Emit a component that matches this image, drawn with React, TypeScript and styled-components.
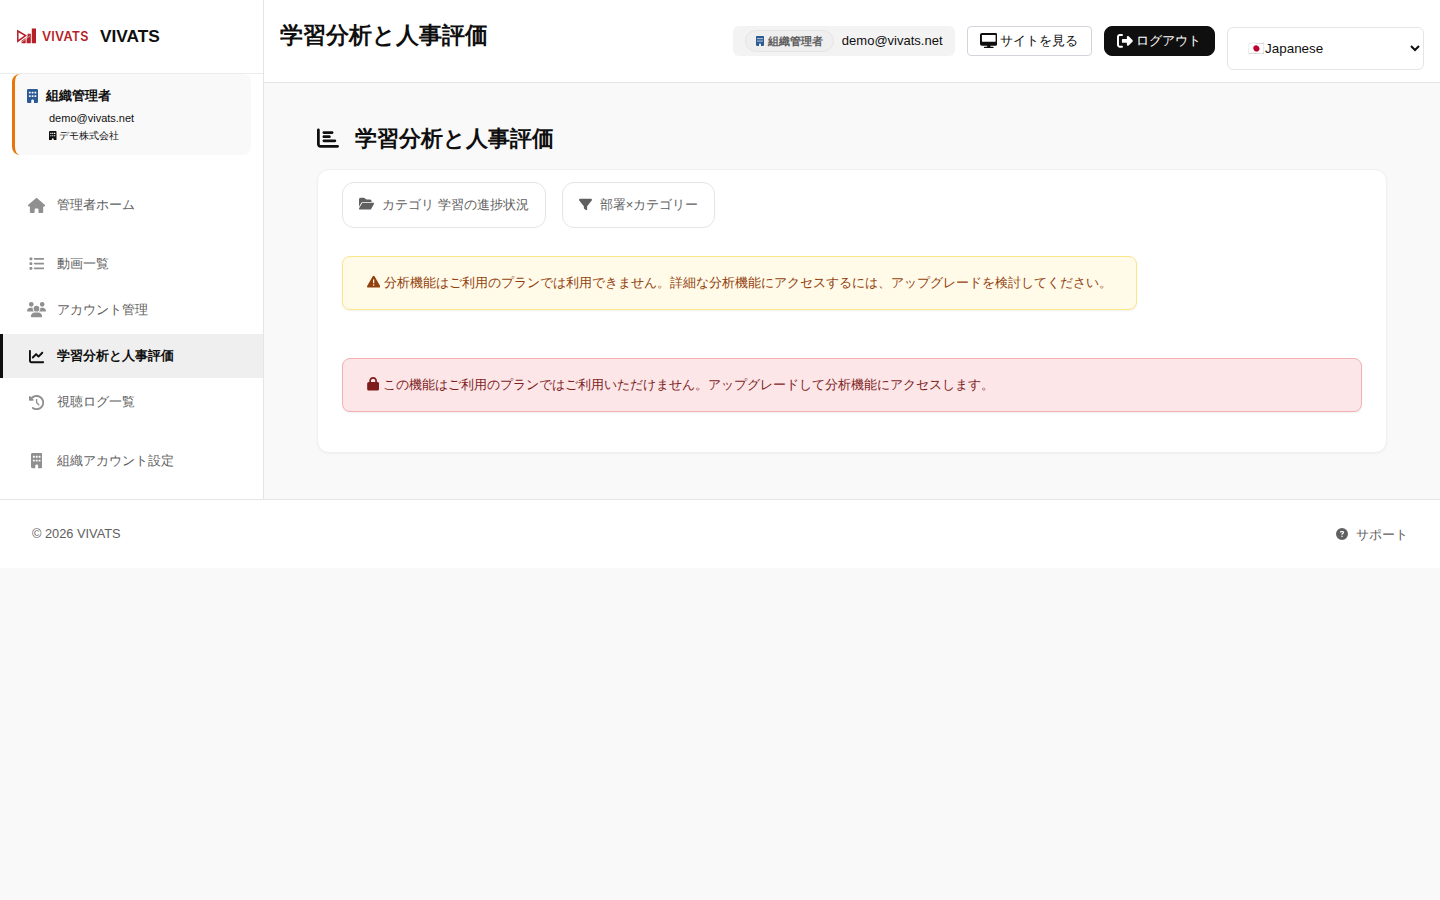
import React from "react";
import styled, { createGlobalStyle, css } from "styled-components";
import {
  FaBuilding, FaHouse, FaList, FaUsers, FaChartLine, FaClockRotateLeft, FaChartBar,
  FaFolderOpen, FaFilter, FaTriangleExclamation, FaLock, FaCircleQuestion, FaDesktop,
  FaRightFromBracket,
} from "react-icons/fa6";

const Global = createGlobalStyle`
  *, *::before, *::after { box-sizing: border-box; }
  body {
    margin: 0;
    background: #f9f9f9;
    color: #0f0f0f;
    font-family: "Liberation Sans", sans-serif;
    font-size: 13px;
    line-height: 20px;
  }
  h1, h2, p { margin: 0; }
`;

const Glyph = styled.span<{ $size: number; $ratio?: number; $lift?: number }>`
  display: flex;
  flex-shrink: 0;
  width: ${(p) => p.$size * (p.$ratio ?? 1)}px;
  height: ${(p) => p.$size}px;
  margin-bottom: ${(p) => p.$lift ?? 2}px;
  svg { display: block; width: 100%; height: 100%; }
`;

const Shell = styled.div`
  display: flex;
  height: 499px;
`;

const Sidebar = styled.aside`
  width: 264px;
  flex-shrink: 0;
  background: #fff;
  border-right: 1px solid #e5e5e5;
`;

const Brand = styled.div`
  display: flex;
  align-items: center;
  height: 74px;
  padding: 0 16px 1px;
  border-bottom: 1px solid #ececec;
`;

const Mark = styled.svg`
  display: block;
  margin-left: 1px;
`;

const LogoText = styled.span`
  margin-left: 5px;
  padding-top: 1px;
  width: 47px;
  color: #b51f28;
  font: 600 12.6px/20px Inter, sans-serif;
  letter-spacing: 0.2px;
`;

const BrandName = styled.span`
  margin-left: 11px;
  font-size: 17.3px;
  font-weight: 700;
`;

const Profile = styled.div`
  height: 81px;
  margin: 0 12px;
  padding: 12px 12px 0;
  background: #f9f9f9;
  border-left: 3px solid #e8750a;
  border-radius: 8px;
`;

const ProfileRole = styled.div`
  display: flex;
  align-items: center;
  gap: 8px;
  height: 20px;
  font-weight: 700;
  svg { color: #2c5a94; }
`;

const ProfileMail = styled.div`
  margin: 4px 0 0 22px;
  font-size: 11px;
  line-height: 17px;
`;

const ProfileOrg = styled.div`
  display: flex;
  align-items: center;
  gap: 2.6px;
  height: 18px;
  margin-left: 22px;
  font-size: 10px;
  line-height: 18px;
`;

const Nav = styled.nav`
  display: flex;
  flex-direction: column;
  gap: 13px;
  padding-top: 28px;
`;

const NavGroup = styled.div`
  display: flex;
  flex-direction: column;
  gap: 2px;
  & + & { padding-top: 2px; }
`;

const NavItem = styled.a<{ $active?: boolean }>`
  display: flex;
  align-items: center;
  gap: 10px;
  height: 44px;
  padding-left: 23px;
  border-left: 3px solid transparent;
  color: #606060;
  svg { color: #909090; }
  ${(p) => p.$active && css`
    background: #efefef;
    border-left-color: #0f0f0f;
    color: #0f0f0f;
    font-weight: 700;
    svg { color: #0f0f0f; }
  `}
`;

const NavIcon = styled.span`
  display: flex;
  justify-content: center;
  width: 21px;
`;

const Main = styled.main`
  flex: 1;
  min-width: 0;
`;

const Header = styled.header`
  display: flex;
  justify-content: space-between;
  align-items: flex-start;
  height: 83px;
  padding: 0 16px;
  background: #fff;
  border-bottom: 1px solid #e5e5e5;
`;

const Title = styled.h1`
  margin-top: 18px;
  font-size: 23.1px;
  line-height: 34px;
`;

const Actions = styled.div`
  display: flex;
  gap: 12px;
  padding-top: 26px;
`;

const UserPill = styled.div`
  display: flex;
  align-items: center;
  gap: 8px;
  height: 30px;
  padding: 0 12px;
  background: #f3f3f3;
  border-radius: 6px;
`;

const RoleBadge = styled.span`
  display: flex;
  align-items: center;
  gap: 4px;
  height: 22px;
  padding: 0 10px;
  background: #efefef;
  border: 1px solid #e5e5e5;
  border-radius: 11px;
  color: #606060;
  font-size: 11px;
  font-weight: 700;
  svg { color: #2c5a94; }
`;

const Button = styled.button<{ $dark?: boolean }>`
  display: flex;
  align-items: center;
  gap: 3.4px;
  height: 30px;
  padding: 0 12.7px 0 12px;
  background: ${(p) => (p.$dark ? "#0f0f0f" : "#fff")};
  border: 1px solid ${(p) => (p.$dark ? "#0f0f0f" : "#d1d5db")};
  border-radius: ${(p) => (p.$dark ? 8 : 4)}px;
  color: ${(p) => (p.$dark ? "#fff" : "#0f0f0f")};
  font: inherit;
`;

const Language = styled.select`
  width: 197px;
  height: 43px;
  margin-top: 1px;
  padding: 0 0 0 16px;
  background: #fff;
  border: 1px solid #e5e5e5;
  border-radius: 6px;
  color: #0f0f0f;
  font-family: inherit;
  font-size: 13.44px;
`;

const Content = styled.div`
  padding: 39px 53px 0;
`;

const Heading = styled.h2`
  display: flex;
  align-items: center;
  gap: 16px;
  height: 34px;
  font-size: 22px;
  line-height: 34px;
`;

const Card = styled.section`
  height: 284px;
  margin-top: 13px;
  padding: 12px 24px;
  background: #fff;
  border: 1px solid #f0f0f0;
  border-radius: 12px;
  box-shadow: 0 1px 2px rgba(0, 0, 0, 0.04);
`;

const Tabs = styled.div`
  display: flex;
  gap: 16px;
`;

const Tab = styled.a`
  display: flex;
  align-items: center;
  gap: 8px;
  height: 46px;
  padding: 0 16px;
  border: 1px solid #e5e5e5;
  border-radius: 12px;
  color: #606060;
`;

const Notice = styled.div<{ $tone: "warning" | "danger" }>`
  display: flex;
  align-items: center;
  gap: 3.6px;
  height: 54px;
  padding: 0 24px;
  border: 1px solid;
  border-radius: 8px;
  box-shadow: 0 1px 2px rgba(0, 0, 0, 0.06);
  ${(p) => p.$tone === "warning" ? css`
    width: fit-content;
    margin-top: 28px;
    background: #fffbe8;
    border-color: #fde68a;
    color: #92400e;
  ` : css`
    margin-top: 48px;
    background: #fce6e8;
    border-color: #f5b0b4;
    color: #7f1d1d;
  `}
`;

const Footer = styled.footer`
  display: flex;
  justify-content: space-between;
  align-items: flex-start;
  height: 69px;
  padding: 24px 32px 0;
  background: #fff;
  border-top: 1px solid #e5e5e5;
  color: #606060;
  font-size: 12.8px;
`;

const Support = styled.a`
  display: flex;
  align-items: center;
  gap: 8px;
  height: 22px;
`;

const LogoMark = () => (
  <Mark width="20" height="16" viewBox="0 0 20 16" fill="#b51f28">
    <path d="M0.8 3 L8.6 7.6 L0.8 13.2 Z" fill="none" stroke="#b51f28" strokeWidth="1.5" />
    <path d="M4.4 15.3 V12.9 L8.7 9.8 V15.3Z M9.6 15.3 V9.2 L10.6 8.4 V5.8 H13.8 V15.3Z M14.8 0.6 H19 V15.3 H14.8Z" />
    <path d="M4 14.6 L13 7.8" stroke="#fff" strokeWidth="0.6" />
  </Mark>
);

export default function App() {
  return (
    <>
      <Global />
      <Shell>
        <Sidebar>
          <Brand>
            <LogoMark />
            <LogoText>VIVATS</LogoText>
            <BrandName>VIVATS</BrandName>
          </Brand>
          <Profile>
            <ProfileRole><Glyph $size={14} $ratio={0.8} $lift={0}><FaBuilding preserveAspectRatio="none" /></Glyph>組織管理者</ProfileRole>
            <ProfileMail>demo@vivats.net</ProfileMail>
            <ProfileOrg><Glyph $size={9.5} $ratio={0.79} $lift={1}><FaBuilding preserveAspectRatio="none" /></Glyph>デモ株式会社</ProfileOrg>
          </Profile>
          <Nav>
            <NavGroup>
              <NavItem><NavIcon><Glyph $size={15.2} $ratio={1.125} $lift={-1}><FaHouse /></Glyph></NavIcon>管理者ホーム</NavItem>
            </NavGroup>
            <NavGroup>
              <NavItem><NavIcon><Glyph $size={15.2} $lift={0}><FaList /></Glyph></NavIcon>動画一覧</NavItem>
              <NavItem><NavIcon><Glyph $size={15.2} $ratio={1.25} $lift={0}><FaUsers /></Glyph></NavIcon>アカウント管理</NavItem>
              <NavItem $active><NavIcon><Glyph $size={15.2} $lift={-1}><FaChartLine /></Glyph></NavIcon>学習分析と人事評価</NavItem>
              <NavItem><NavIcon><Glyph $size={15.2} $lift={-1}><FaClockRotateLeft /></Glyph></NavIcon>視聴ログ一覧</NavItem>
            </NavGroup>
            <NavGroup>
              <NavItem><NavIcon><Glyph $size={15.2} $ratio={0.75} $lift={0}><FaBuilding /></Glyph></NavIcon>組織アカウント設定</NavItem>
            </NavGroup>
          </Nav>
        </Sidebar>
        <Main>
          <Header>
            <Title>学習分析と人事評価</Title>
            <Actions>
              <UserPill>
                <RoleBadge><Glyph $size={10} $ratio={0.8} $lift={0}><FaBuilding preserveAspectRatio="none" /></Glyph>組織管理者</RoleBadge>
                demo@vivats.net
              </UserPill>
              <Button><Glyph $size={15.6} $ratio={1.125} $lift={1}><FaDesktop /></Glyph>サイトを見る</Button>
              <Button $dark><Glyph $size={15.8} $lift={1}><FaRightFromBracket /></Glyph>ログアウト</Button>
              <Language><option>🇯🇵Japanese</option></Language>
            </Actions>
          </Header>
          <Content>
            <Heading><Glyph $size={22}><FaChartBar /></Glyph>学習分析と人事評価</Heading>
            <Card>
              <Tabs>
                <Tab><Glyph $size={13.4} $ratio={1.125}><FaFolderOpen /></Glyph>カテゴリ 学習の進捗状況</Tab>
                <Tab><Glyph $size={13}><FaFilter /></Glyph>部署×カテゴリー</Tab>
              </Tabs>
              <Notice $tone="warning">
                <Glyph $size={13.3}><FaTriangleExclamation /></Glyph>
                分析機能はご利用のプランでは利用できません。詳細な分析機能にアクセスするには、アップグレードを検討してください。
              </Notice>
              <Notice $tone="danger">
                <Glyph $size={13.6} $ratio={0.9}><FaLock /></Glyph>
                この機能はご利用のプランではご利用いただけません。アップグレードして分析機能にアクセスします。
              </Notice>
            </Card>
          </Content>
        </Main>
      </Shell>
      <Footer>
        <span>© 2026 VIVATS</span>
        <Support><Glyph $size={12}><FaCircleQuestion /></Glyph>サポート</Support>
      </Footer>
    </>
  );
}
